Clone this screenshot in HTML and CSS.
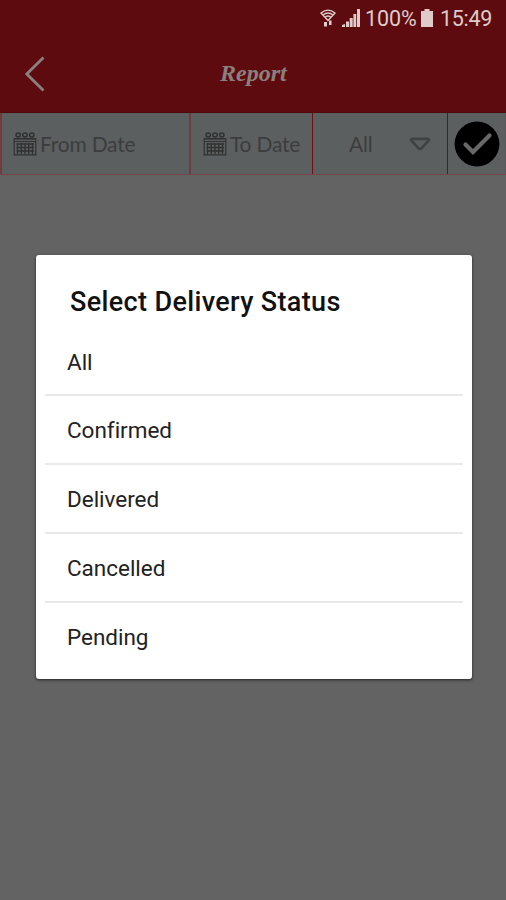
FILE: index.html
```html
<!DOCTYPE html>
<html lang="en">
<head>
<meta charset="utf-8">
<title>Report</title>
<link rel="stylesheet" href="styles.css">
</head>
<body>
<svg class="defs" width="0" height="0" aria-hidden="true">
  <symbol id="calendar" viewBox="0 0 24 24">
    <path d="M1.2 6.5V22.8H22.8V6.5ZM1.5 9.5H22.5" fill="none" stroke="currentColor" stroke-width="1.2"/>
    <path d="M3.5 12H21M3.5 15.5H21M3.5 19H21M4.5 11V22M8.3 11V22M12 11V22M15.7 11V22M19.5 11V22" fill="none" stroke="currentColor" stroke-width="1.3"/>
    <path d="M2 6.8H22" stroke="currentColor" stroke-width="1.6"/>
    <g fill="none" stroke="currentColor" stroke-width="1.5"><ellipse cx="5.2" cy="3" rx="2.2" ry="1.9"/><ellipse cx="12" cy="3" rx="2.2" ry="1.9"/><ellipse cx="18.8" cy="3" rx="2.2" ry="1.9"/></g>
  </symbol>
</svg>
<header class="header">
  <div class="status">
    <svg class="wifi" viewBox="0 0 16 18"><g fill="none" stroke="currentColor" stroke-width="1.4"><path d="M1 4Q8-1.8 15 4L8 11.5Z"/><path d="M3.2 5.8Q8 2.3 12.8 5.8M5.3 8Q8 6 10.7 8"/></g><path d="M4 13H7V17.5H4ZM9 11.5H11.5V16H9Z" fill="currentColor"/></svg>
    <svg class="signal" viewBox="0 0 18 18"><path d="M0 18V16L3 15V18ZM4 18V12.5H7V18ZM7.7 18V9H10.7V18ZM11.4 18V5H14.2V18ZM15 18V0H18V18Z" fill="currentColor"/></svg>
    <span class="percent">100%</span>
    <svg class="battery" viewBox="0 0 12 18"><path d="M3.5 0H8.5V2H12V18H0V2H3.5Z" fill="currentColor"/></svg>
    <span class="clock">15:49</span>
  </div>
  <div class="bar">
    <svg class="back" viewBox="0 0 20 36"><path d="M18.5 1.5 1.8 18 18.5 34.5" fill="none" stroke="currentColor" stroke-width="2.8"/></svg>
    <h1 class="title">Report</h1>
  </div>
</header>
<div class="filters">
  <div class="cell from"><svg class="cal"><use href="#calendar"/></svg><span>From Date</span></div>
  <div class="cell to"><svg class="cal"><use href="#calendar"/></svg><span>To Date</span></div>
  <div class="cell choice"><span>All</span><svg class="caret" viewBox="0 0 22 14"><path d="M3 1.8H19Q20.5 2 19.5 3.6L12.5 11.3Q11 12.7 9.5 11.3L2.5 3.6Q1.5 2 3 1.8Z" fill="none" stroke="currentColor" stroke-width="2.7"/></svg></div>
  <div class="cell apply"><svg class="check" viewBox="0 0 46 46"><circle cx="23" cy="23" r="22.4" fill="#000"/><path d="M11.5 23.5 19 31 35.5 14.5" fill="none" stroke="#686868" stroke-width="4.2" stroke-linecap="round"/></svg></div>
</div>
<main class="content">
  <section class="dialog">
    <h2>Select Delivery Status</h2>
    <ul>
      <li>All</li>
      <li>Confirmed</li>
      <li>Delivered</li>
      <li>Cancelled</li>
      <li>Pending</li>
    </ul>
  </section>
</main>
</body>
</html>
```
FILE: styles.css
```css
* { box-sizing: border-box; }
body { margin: 0; height: 900px; overflow: hidden; background: #636363; font-family: Roboto, sans-serif; }
.defs { display: block; }
svg { flex: none; }
.header { height: 113px; background: #5e0b0f; border-bottom: 1px solid #51080b; }
.status { display: flex; align-items: center; height: 36px; padding: 0 14px 0 320px; color: #dfcbca; font-size: 21.5px; }
.wifi { width: 16px; height: 18px; }
.signal { width: 18px; height: 18px; margin-left: 6px; }
.percent { width: 52px; margin-left: 5px; white-space: nowrap; letter-spacing: -.1px; }
.battery { width: 12px; height: 18px; margin-left: 4px; }
.clock { margin-left: 7px; white-space: nowrap; letter-spacing: -.3px; }
.bar { display: flex; align-items: center; height: 76px; padding-left: 25px; color: #898180; }
.back { width: 20px; height: 36px; }
.title { margin: 0 0 2px 175px; font: italic 700 24px/30px "Liberation Serif", serif; letter-spacing: 0; }
.filters { display: flex; height: 62px; background: #5b5f5f; border-bottom: 1px solid #754848; color: #3b3d3d; font: 21px Lato, sans-serif; letter-spacing: -.22px; }
.cell { display: flex; align-items: center; white-space: nowrap; }
.cal { width: 24px; height: 24px; margin-right: 3px; color: #303232; }
.from { width: 191px; padding-left: 12px; border-left: 2px solid #713c3f; border-right: 2px solid #713c3f; }
.from .cal { margin-left: -1px; }
.to { width: 122px; padding-left: 12px; border-right: 1px solid #710f15; }
.choice { width: 135px; padding-left: 36px; border-right: 1px solid #710f15; }
.caret { width: 22px; height: 14px; margin-left: 37px; color: #414343; }
.apply { width: 58px; padding-left: 6px; border-right: 1px solid #6c5052; }
.check { width: 46px; height: 46px; }
.content { padding: 80px 34px 0 36px; }
.dialog { height: 424px; padding: 31px 9px 0; background: #fff; border-radius: 3px; box-shadow: 0 1px 3px #222; color: #111; }
.dialog h2 { margin: 0 0 11px 25px; font-size: 27px; line-height: 32px; font-weight: 500; letter-spacing: .35px; white-space: nowrap; }
.dialog ul { margin: 0; padding: 0; list-style: none; }
.dialog li { display: flex; align-items: center; height: 69px; border-bottom: 2px solid #e9e9e9; padding: 0 22px; font-size: 22.5px; letter-spacing: -.02px; color: #222; }
.dialog li:first-child { height: 67px; }
.dialog li:last-child { height: 67px; border: 0; }
```
